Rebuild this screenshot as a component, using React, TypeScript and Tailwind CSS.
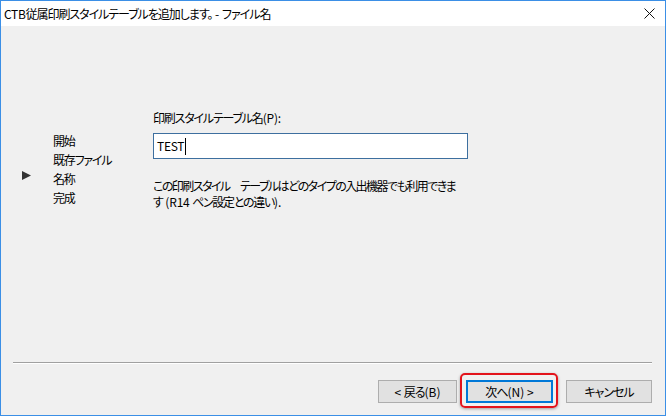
import React from "react";

const font = "font-['Noto_Sans_CJK_JP','Noto_Sans',sans-serif] [font-feature-settings:'palt']";

export default function App() {
  return (
    <div className={`w-[666px] h-[416px] border border-[#3b8fe6] bg-[#f0f0f0] flex flex-col text-[12px] text-[#000] ${font}`}>
      {/* Title bar */}
      <div className="h-[25px] bg-white flex items-center justify-between pl-[3px] pr-[10px]">
        <span className="leading-[16px] mt-[1px] whitespace-pre">
          <span className="tracking-[-0.3px]">CTB</span>
          <span className="tracking-[-1.05px]">従属印刷スタイルテーブルを追加します。</span>
          <span> - </span>
          <span className="tracking-[-1px]">ファイル名</span>
        </span>
        <svg width="11" height="11" viewBox="0 0 11 11" className="mb-[1px]">
          <path d="M0.5 0.5 L10.5 10.5 M10.5 0.5 L0.5 10.5" stroke="#111" strokeWidth="1" fill="none" />
        </svg>
      </div>

      {/* Body */}
      <div className="flex-1 flex flex-col">
        <div className="flex-1 flex items-start pt-[84px]">
          {/* Left step list */}
          <div className="w-[152px] mt-[21px] flex flex-col">
            {[
              { t: "開始", a: false },
              { t: "既存ファイル", a: false },
              { t: "名称", a: true },
              { t: "完成", a: false },
            ].map((s) => (
              <div key={s.t} className="flex items-start h-[19px] leading-[19px]">
                <div className="w-[52px] pl-[21px] pt-[2px]">
                  {s.a && (
                    <svg width="9" height="9" viewBox="0 0 9 9">
                      <polygon points="0,0 9,4.5 0,9" fill="#333" />
                    </svg>
                  )}
                </div>
                <span className="tracking-[-1.2px]">{s.t}</span>
              </div>
            ))}
          </div>

          {/* Right */}
          <div className="flex flex-col w-[315px]">
            <div className="leading-[16px] whitespace-pre">
              <span className="tracking-[-1.2px]">印刷スタイルテーブル名</span>
              <span className="tracking-[-0.2px]">(P):</span>
            </div>
            <div className="mt-[7px] h-[26px] border border-[#3d6f9f] bg-white flex items-center pl-[3px]">
              <span className="leading-[16px] tracking-[-0.3px]">TEST</span>
              <span className="w-[1px] h-[17px] bg-black ml-[1px]" />
            </div>
            <div className="mt-[19px] leading-[16px] whitespace-pre">
              <div className="tracking-[-1.55px]">この印刷スタイル　テーブルはどのタイプの入出機器でも利用できま</div>
              <div>
                <span className="tracking-[-1px]">す</span>
                <span className="tracking-[-0.2px]"> (R14 </span>
                <span className="tracking-[-1.3px]">ペン設定との違い</span>
                <span>).</span>
              </div>
            </div>
          </div>
        </div>

        {/* Separator */}
        <div className="ml-[12px] mr-[13px] border-t border-[#a0a0a0] border-b border-b-white" />

        {/* Buttons */}
        <div className="flex justify-end items-start pt-[16px] pb-[12px] pr-[13px]">
          <button className={`w-[79px] h-[23px] bg-[#e1e1e1] border border-[#adadad] leading-[16px] text-[12px] whitespace-pre ${font}`}>
            <span>&lt; </span>
            <span className="tracking-[-1px]">戻る</span>
            <span>(B)</span>
          </button>
          <div className="relative ml-[9px]">
            <button className={`w-[87px] h-[23px] bg-[#e1e1e1] border-2 border-[#0078d7] leading-[16px] text-[12px] whitespace-pre ${font}`}>
              <span className="tracking-[-1px]">次へ</span>
              <span>(N) &gt;</span>
            </button>
            <span className="absolute left-[-6px] top-[-7px] right-[-5px] bottom-[-5px] border-2 border-[#e3131b] rounded-[5px] shadow-[0_1px_3px_rgba(0,0,0,0.35)]" />
          </div>
          <button className={`ml-[13px] w-[86px] h-[23px] bg-[#e1e1e1] border border-[#adadad] leading-[16px] text-[12px] tracking-[-1px] ${font}`}>
            キャンセル
          </button>
        </div>
      </div>
    </div>
  );
}
